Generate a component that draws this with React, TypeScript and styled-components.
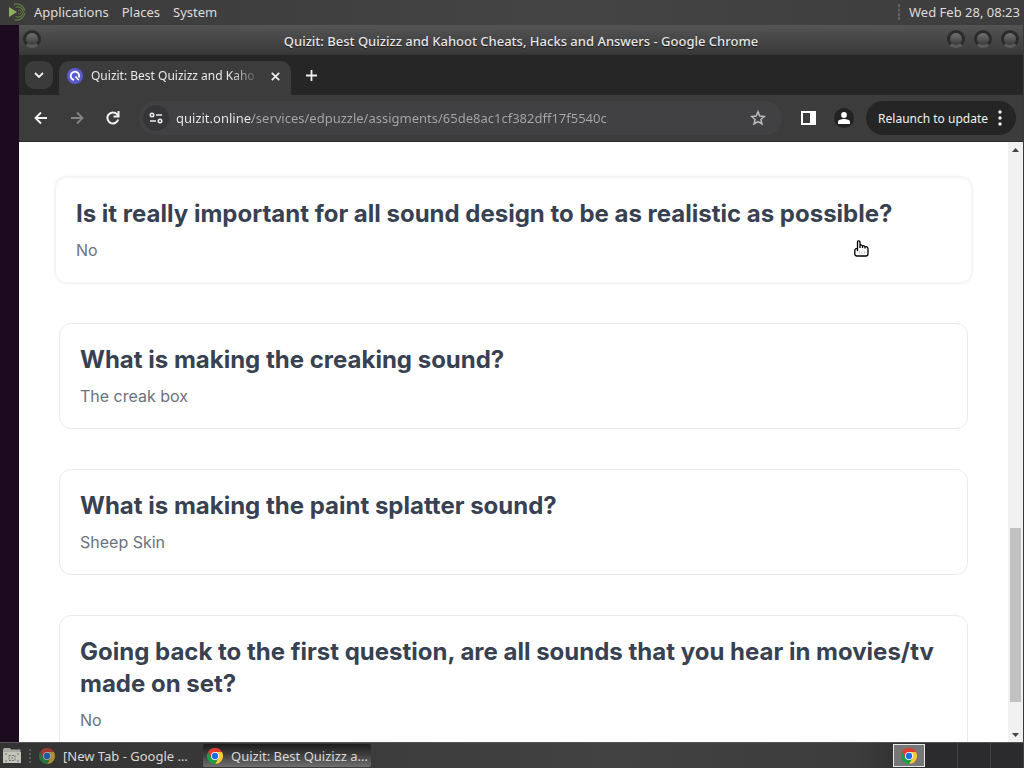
import React from "react";
import styled, { createGlobalStyle } from "styled-components";

const GlobalStyle = createGlobalStyle`
  * { box-sizing: border-box; }
  body {
    margin: 0;
    font-family: "Noto Sans", sans-serif;
    font-size: 13px;
    background: #1c0a1e;
  }
  button { font: inherit; color: inherit; border: 0; padding: 0; background: none; }
  svg { display: block; flex: none; }
`;

const Desktop = styled.div`
  display: grid;
  grid-template-rows: 25px minmax(0, 1fr) 26px;
  height: 100vh;
  overflow: hidden;
`;

const Panel = styled.header`
  display: flex;
  align-items: center;
  gap: 14px;
  padding: 0 4px 2px 8px;
  color: #dcdcdc;
  background: linear-gradient(90deg, #3c3b3b, #454444 55%, #3e3d3d);
`;

const PanelMenu = styled.nav`
  display: flex;
  flex: 1;
  gap: 13px;
`;

const MenuButton = styled.button`
  display: flex;
  align-items: center;
  gap: 7px;
  line-height: 20px;
`;

const Clock = styled.time`
  display: flex;
  align-items: center;
  gap: 8px;
  line-height: 20px;
`;

const Window = styled.section`
  display: flex;
  flex-direction: column;
  min-height: 0;
  margin-left: 19px;
  border-right: 1px solid #3a3a3a;
  background: #3c3c3c;
`;

const TitleBar = styled.div`
  display: grid;
  grid-template-columns: 72px 1fr 72px;
  align-items: center;
  height: 30px;
  padding: 0 4px;
  color: #e6e6e6;
  background: linear-gradient(#545454, #3d3d3d 85%, #353535);
`;

const Title = styled.h1`
  margin: 0;
  padding-top: 2px;
  font-size: 13px;
  line-height: 20px;
  font-weight: 500;
  text-align: center;
  text-shadow: 0 1px 1px #1c1c1c;
  white-space: nowrap;
`;

const WindowButtons = styled.div`
  display: flex;
  justify-content: flex-end;
  gap: 9px;
`;

const RoundButton = styled.button`
  width: 18px;
  height: 18px;
  margin-bottom: 3px;
  border: 3px solid #2b2b2b;
  border-bottom-color: #5a5a5a;
  border-radius: 50%;
  background: linear-gradient(#727272, #3a3a3a);
`;

const TabStrip = styled.div`
  display: flex;
  align-items: flex-end;
  height: 40px;
  padding-left: 6px;
  color: #e8e8e8;
  background: #262627;
`;

const TabSearch = styled.button`
  display: grid;
  place-items: center;
  width: 28px;
  height: 28px;
  margin: 0 6px 6px 0;
  border-radius: 9px;
  background: #3b3b3c;
`;

const Tab = styled.div`
  display: flex;
  align-items: center;
  gap: 8px;
  width: 232px;
  height: 34px;
  padding: 0 10px 4px 8px;
  border-radius: 10px 10px 0 0;
  background: #3c3c3d;
`;

const TabLabel = styled.span`
  flex: 1;
  min-width: 0;
  font-size: 12px;
  line-height: 20px;
  white-space: nowrap;
  mask-image: linear-gradient(90deg, #000 82%, transparent);
`;

const IconButton = styled.button<{ $size?: number }>`
  display: grid;
  place-items: center;
  flex: none;
  width: ${(p) => p.$size ?? 36}px;
  height: ${(p) => p.$size ?? 36}px;
`;

const Toolbar = styled.div`
  display: flex;
  align-items: center;
  height: 47px;
  padding: 0 7px 0 4px;
  border-bottom: 1px solid #2b2b2b;
  color: #f1f1f1;
  background: #3c3c3d;
`;

const AddressBar = styled.label`
  display: flex;
  flex: 1;
  align-items: center;
  height: 34px;
  margin: 0 8px;
  padding: 0 10px 0 4px;
  border-radius: 17px;
  background: #414042;
`;

const SiteInfo = styled.span`
  display: grid;
  place-items: center;
  width: 26px;
  height: 26px;
  margin-right: 7px;
  border-radius: 50%;
  background: #363638;
`;

const AddressInput = styled.input`
  flex: 1;
  min-width: 0;
  padding: 0;
  border: 0;
  outline: 0;
  font: inherit;
  font-size: 13px;
  line-height: 20px;
  color: #a8a8a8;
  background: linear-gradient(90deg, #eeeeee 76px, #a8a8a8 76px);
  background-clip: text;
  -webkit-background-clip: text;
  -webkit-text-fill-color: transparent;
`;

const Avatar = styled.span`
  display: grid;
  place-items: center;
  width: 20px;
  height: 20px;
  border-radius: 50%;
  background: #222223;
`;

const Relaunch = styled.button`
  display: flex;
  align-items: center;
  gap: 10px;
  height: 34px;
  margin-left: 4px;
  padding: 0 14px 0 12px;
  border-radius: 17px;
  font-size: 12px;
  background: #252526;
  white-space: nowrap;
`;

const Viewport = styled.div`
  display: flex;
  flex: 1;
  min-height: 0;
  background: #ffffff;
`;

const Page = styled.main`
  flex: 1;
  min-width: 0;
  overflow: hidden;
  padding: 35px 40px 0;
  font-family: Inter, sans-serif;
  font-variant-ligatures: none;
`;

const CardList = styled.div`
  display: flex;
  flex-direction: column;
  gap: 40px;
`;

const Card = styled.article<{ $hovered?: boolean }>`
  position: relative;
  padding: 20px;
  margin: 0 ${(p) => (p.$hovered ? -4 : 0)}px;
  border: 1px solid ${(p) => (p.$hovered ? "#f6f6f7" : "#e9eaec")};
  border-radius: 12px;
  box-shadow: ${(p) => (p.$hovered ? "0 0 2px 1px #f1f1f2" : "none")};
`;

const Question = styled.h2`
  margin: 0 0 8px;
  font-size: 24px;
  line-height: 32px;
  font-weight: 700;
  color: #374151;
`;

const Answer = styled.p`
  margin: 0;
  font-size: 16px;
  line-height: 24px;
  font-weight: 400;
  color: #6b7280;
`;

const Pointer = styled.svg`
  position: absolute;
  top: 62px;
  right: 102px;
`;

const ScrollBar = styled.div`
  display: flex;
  flex-direction: column;
  width: 15px;
  background: #f1f1f1;
`;

const ScrollTrack = styled.div`
  display: grid;
  flex: 1;
  grid-template-rows: 371fr 174fr 25fr;
  padding: 0 2px;
`;

const ScrollThumb = styled.div`
  grid-row: 2;
  background: #c1c1c1;
`;

const TaskBar = styled.footer`
  display: flex;
  align-items: center;
  padding-left: 2px;
  border-top: 1px solid #555555;
  color: #d8d8d8;
  background: linear-gradient(90deg, #333333, #424242 60%, #3c3c3c 84%, #2b2b2d 90%);
`;

const Task = styled.button<{ $active?: boolean }>`
  display: flex;
  align-items: center;
  gap: 8px;
  width: 168px;
  height: 23px;
  padding: 0 4px;
  border-radius: 2px;
  text-align: left;
  white-space: nowrap;
  background: ${(p) => (p.$active ? "linear-gradient(#1d1d1d, #3c3c3c 45%, #6f6f6f)" : "none")};
`;

const Handle = styled.span`
  width: 2px;
  height: 14px;
  margin: 0 4px 0 7px;
  border-left: 2px dotted #5c5c5c;
`;

const Workspaces = styled.div`
  display: flex;
  height: 25px;
  margin-left: auto;
`;

const Workspace = styled.button<{ $current?: boolean }>`
  display: grid;
  place-items: center;
  width: ${(p) => (p.$current ? 32 : 33)}px;
  margin: ${(p) => (p.$current ? "1px 0" : "0")};
  border: ${(p) => (p.$current ? "1px solid #e8e8e8" : "0 solid #424244")};
  border-right-width: 1px;
  background: ${(p) => (p.$current ? "#777777" : "#2b2b2d")};
`;

const ChromeLogo = ({ size = 16, dim = false }: { size?: number; dim?: boolean }) => (
  <svg width={size} height={size} viewBox="0 0 48 48" opacity={dim ? 0.6 : 1} aria-hidden>
    <path d="M24 12H44.8A24 24 0 0 1 24 48L34.4 30Z" fill="#fcc934" />
    <path d="M13.6 30 3.2 12A24 24 0 0 0 24 48L34.4 30Z" fill="#1e9e4a" />
    <path d="M24 12H44.8A24 24 0 0 0 3.2 12L13.6 30Z" fill="#e33b2e" />
    <circle cx="24" cy="24" r="12" fill="#fff" />
    <circle cx="24" cy="24" r="9.5" fill="#1a6fe8" />
  </svg>
);

const MateLogo = () => (
  <svg width="19" height="18" viewBox="0 0 19 18" fill="none" aria-hidden>
    <path d="M1 4v10l8-5Z" fill="#8fb158" />
    <path d="M6 1.500A8 8 0 1 1 6 16.500" stroke="#5d7440" strokeWidth="1.4" strokeDasharray="14 2" />
    <path d="M7.500 4.700A5 5 0 1 1 7.500 13.300" stroke="#5d7440" strokeWidth="1.3" />
    <path d="M10 7.500a2 2 0 1 1 0 3" stroke="#5d7440" />
  </svg>
);

const Arrow = ({ dim = false }: { dim?: boolean }) => (
  <svg width="14" height="14" viewBox="0 0 14 14" fill="none" stroke={dim ? "#858586" : "#f4f4f4"} strokeWidth="1.8" aria-hidden>
    <path d={dim ? "M1 7h11M7 1.5 12.5 7 7 12.5" : "M13 7H2M7 1.5 1.5 7 7 12.5"} />
  </svg>
);

const ScrollArrow = ({ down = false }: { down?: boolean }) => (
  <svg width="7" height="4" viewBox="0 0 7 4" fill="#444" aria-hidden>
    <path d={down ? "M0 0h7L3.5 4Z" : "M0 4h7L3.5 0Z"} />
  </svg>
);

const cards = [
  { question: "Is it really important for all sound design to be as realistic as possible?", answer: "No", hovered: true },
  { question: "What is making the creaking sound?", answer: "The creak box" },
  { question: "What is making the paint splatter sound?", answer: "Sheep Skin" },
  { question: "Going back to the first question, are all sounds that you hear in movies/tv made on set?", answer: "No" },
];

export default function App() {
  return (
    <Desktop>
      <GlobalStyle />
      <Panel>
        <PanelMenu aria-label="Desktop">
          <MenuButton><MateLogo />Applications</MenuButton>
          <MenuButton>Places</MenuButton>
          <MenuButton>System</MenuButton>
        </PanelMenu>
        <Clock>
          <svg width="3" height="16" viewBox="0 0 3 16" fill="#626262" aria-hidden>
            <path d="M0 0h2v3H0zM0 4.500h2v3H0zM0 9h2v3H0zM0 13h2v3H0z" />
          </svg>
          Wed Feb 28, 08:23
        </Clock>
      </Panel>

      <Window>
        <TitleBar>
          <RoundButton aria-label="Window menu" />
          <Title>Quizit: Best Quizizz and Kahoot Cheats, Hacks and Answers - Google Chrome</Title>
          <WindowButtons>
            <RoundButton aria-label="Minimize" />
            <RoundButton aria-label="Maximize" />
            <RoundButton aria-label="Close window" />
          </WindowButtons>
        </TitleBar>

        <TabStrip>
          <TabSearch aria-label="Search tabs">
            <svg width="10" height="6" viewBox="0 0 10 6" fill="none" stroke="#f0f0f0" strokeWidth="1.8"><path d="m1 1 4 4 4-4" /></svg>
          </TabSearch>
          <Tab>
            <svg width="16" height="16" viewBox="0 0 16 16" fill="none" aria-hidden>
              <circle cx="8" cy="8" r="8" fill="#5b5bd0" />
              <path d="M7 12A4.200 4.200 0 1 1 11.800 9.500" stroke="#fff" strokeWidth="1.8" />
              <path d="m8.500 8.500 3.200 3.500" stroke="#fff" strokeWidth="1.8" />
            </svg>
            <TabLabel>Quizit: Best Quizizz and Kaho</TabLabel>
            <IconButton $size={12} aria-label="Close tab">
              <svg width="9" height="9" viewBox="0 0 9 9" stroke="#f0f0f0" strokeWidth="1.7"><path d="m.8.8 7.400 7.400M8.200.8.8 8.200" /></svg>
            </IconButton>
          </Tab>
          <IconButton $size={40} aria-label="New tab">
            <svg width="11" height="11" viewBox="0 0 11 11" stroke="#f0f0f0" strokeWidth="1.8"><path d="M5.500 0v11M0 5.500h11" /></svg>
          </IconButton>
        </TabStrip>

        <Toolbar>
          <IconButton aria-label="Back"><Arrow /></IconButton>
          <IconButton aria-label="Forward"><Arrow dim /></IconButton>
          <IconButton aria-label="Reload">
            <svg width="14" height="14" viewBox="0 0 14 14" fill="none" stroke="#f4f4f4" strokeWidth="2" aria-hidden>
              <path d="M12.200 8.500A5.500 5.500 0 1 1 11 3.200L12.500 5" />
              <path d="M12.500 0v5.500H7.500" />
            </svg>
          </IconButton>
          <AddressBar>
            <SiteInfo>
              <svg width="14" height="12" viewBox="0 0 14 12" fill="none" stroke="#ececec" strokeWidth="1.6" aria-hidden>
                <circle cx="3" cy="3" r="1.700" /><path d="M7 3h6M1 9h6" /><circle cx="11" cy="9" r="1.700" />
              </svg>
            </SiteInfo>
            <AddressInput aria-label="Address" defaultValue="quizit.online/services/edpuzzle/assigments/65de8ac1cf382dff17f5540c" />
            <IconButton $size={28} aria-label="Bookmark this page">
              <svg width="16" height="16" viewBox="0 0 16 16" fill="none" stroke="#bdbdbf" strokeWidth="1.5" aria-hidden>
                <path d="m8 1.800 1.800 4.300 4.600.4-3.500 3 1.100 4.500L8 11.600 4 14l1.100-4.500-3.500-3 4.600-.4Z" />
              </svg>
            </IconButton>
          </AddressBar>
          <IconButton aria-label="Side panel">
            <svg width="15" height="14" viewBox="0 0 15 14" aria-hidden>
              <rect x="1" y="1" width="13" height="12" fill="none" stroke="#fff" strokeWidth="2" />
              <path d="M9 1h5v12H9Z" fill="#fff" />
            </svg>
          </IconButton>
          <IconButton aria-label="Profile">
            <Avatar>
              <svg width="12" height="12" viewBox="0 0 12 12" fill="#fff" aria-hidden>
                <circle cx="6" cy="3" r="2.900" /><path d="M0 12V9.800C0 8 3.500 7 6 7s6 1 6 2.800V12Z" />
              </svg>
            </Avatar>
          </IconButton>
          <Relaunch>
            Relaunch to update
            <svg width="4" height="16" viewBox="0 0 4 16" fill="#f4f4f4" aria-hidden>
              <circle cx="2" cy="2" r="1.700" /><circle cx="2" cy="8" r="1.700" /><circle cx="2" cy="14" r="1.700" />
            </svg>
          </Relaunch>
        </Toolbar>

        <Viewport>
          <Page>
            <CardList>
              {cards.map((card) => (
                <Card key={card.question} $hovered={card.hovered}>
                  <Question>{card.question}</Question>
                  <Answer>{card.answer}</Answer>
                  {card.hovered && (
                    <Pointer width="15" height="17" viewBox="0 0 15 17" fill="#fff" stroke="#000" strokeWidth="1.300" strokeLinejoin="round" aria-hidden>
                      <path d="M3.500 9V2C3.500.4 6 .4 6 2v3.500c.5-.8 2.300-.6 2.500.6.6-.7 2.200-.4 2.500.8.8-.6 3-.2 3 1.600v5c0 1.600-.8 2.500-2 2.500H3c-1.300 0-2.200-1-2.200-2.500v-3C.8 8.800 2.300 8 3.500 9Zm0 0v2M6 5.500V8M8.500 6v2M11 7v1.500" />
                      <path d="M5.500 11.500v2M8 11.500v2M10.500 11.500v2" stroke="#bbb" strokeWidth="1" />
                    </Pointer>
                  )}
                </Card>
              ))}
            </CardList>
          </Page>
          <ScrollBar>
            <IconButton $size={15} aria-label="Scroll up"><ScrollArrow /></IconButton>
            <ScrollTrack><ScrollThumb /></ScrollTrack>
            <IconButton $size={15} aria-label="Scroll down"><ScrollArrow down /></IconButton>
          </ScrollBar>
        </Viewport>
      </Window>

      <TaskBar>
        <IconButton $size={20} aria-label="Show desktop">
          <svg width="20" height="17" viewBox="0 0 20 17" aria-hidden>
            <path d="M1 2.500 2 1h6l1 1.500h9.500V16H1Z" fill="#a9aaa0" />
            <path d="M1 5h18v11H1Z" fill="#c3c4ba" />
            <path d="M7 8.500h6v5H7Z" fill="none" stroke="#74756d" strokeDasharray="2 1" />
            <path d="M3 7h2M15 7h2M3 14h2M15 14h2M9 11h2" stroke="#74756d" />
          </svg>
        </IconButton>
        <Handle />
        <Task><ChromeLogo dim />[New Tab - Google …</Task>
        <Task $active><ChromeLogo />Quizit: Best Quizizz a…</Task>
        <Workspaces>
          <Workspace $current aria-label="Workspace 1"><ChromeLogo /></Workspace>
          <Workspace aria-label="Workspace 2" />
          <Workspace aria-label="Workspace 3" />
          <Workspace aria-label="Workspace 4" />
        </Workspaces>
      </TaskBar>
    </Desktop>
  );
}
